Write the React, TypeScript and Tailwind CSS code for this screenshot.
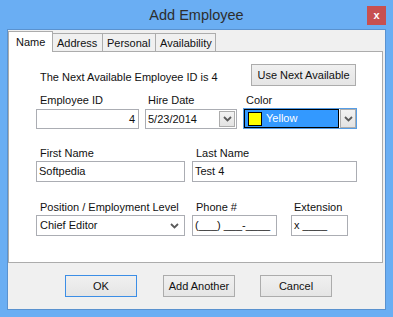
import React from "react";

const font = { fontFamily: '"Liberation Sans", Arial, sans-serif' };

function Chevron() {
  return (
    <svg width="9" height="6" viewBox="0 0 9 6" className="block">
      <path d="M1 1 L4.5 4.5 L8 1" fill="none" stroke="#5a5a5a" strokeWidth="1.8" />
    </svg>
  );
}

function ArrowBox() {
  return (
    <div className="w-[16px] h-full border border-[#acacac] bg-gradient-to-b from-[#f2f2f2] to-[#e3e3e3] flex items-center justify-center">
      <Chevron />
    </div>
  );
}

function Label({ children, indent = "pl-[4px]" }: { children: React.ReactNode; indent?: string }) {
  return <div className={`h-[14px] leading-[14px] ${indent} text-[#111]`}>{children}</div>;
}

function Button({ children, width, primary }: { children: React.ReactNode; width: string; primary?: boolean }) {
  return (
    <div
      className={`${width} h-[22px] flex items-center justify-center border bg-gradient-to-b from-[#f0f0f0] to-[#e5e5e5] text-[#111] ${
        primary ? "border-[#3c8ee6]" : "border-[#acacac]"
      }`}
    >
      {children}
    </div>
  );
}

export default function App() {
  return (
    <div className="w-[393px] h-[317px] bg-[#6aaef3] px-[7px] pb-[7px] flex flex-col text-[11px]" style={font}>
      {/* title bar */}
      <div className="h-[29px] grid grid-cols-[1fr_auto_1fr] items-start">
        <div />
        <div className="pt-[6px] text-[14.5px] leading-[18px] text-[#2d2d2d]">Add Employee</div>
        <div className="flex justify-end pt-[6px]">
          <div className="w-[19px] h-[19px] bg-[#c75050] flex items-center justify-center text-white font-bold text-[11px] leading-none">
            x
          </div>
        </div>
      </div>

      {/* client */}
      <div className="flex-1 border border-[#5a92cf] bg-[#f0f0f0] flex flex-col">
        {/* tabs */}
        <div className="flex items-start h-[22px] pt-[1px] -mb-px relative z-10">
          <div className="w-[45px] h-[21px] bg-white border-l border-t border-r border-[#acacac] pl-[7px] pt-[3px] leading-[14px] text-[#111]">
            Name
          </div>
          <div className="w-[50px] h-[18px] mt-[2px] bg-[#f0f0f0] border-t border-r border-[#acacac] pl-[4px] pt-[2px] leading-[14px] text-[#111]">
            Address
          </div>
          <div className="w-[53px] h-[18px] mt-[2px] bg-[#f0f0f0] border-t border-r border-[#acacac] pl-[4px] pt-[2px] leading-[14px] text-[#111]">
            Personal
          </div>
          <div className="w-[60px] h-[18px] mt-[2px] bg-[#f0f0f0] border-t border-r border-[#acacac] pl-[4px] pt-[2px] leading-[14px] text-[#111]">
            Availability
          </div>
        </div>

        {/* panel */}
        <div className="w-[375px] h-[212px] bg-white border border-[#acacac] pl-[27px] pt-[12px] flex flex-col">
          <div className="w-[320px] h-[22px] flex items-center justify-between">
            <div className="pl-[4px] pt-[4px] text-[#111]">The Next Available Employee ID is 4</div>
            <Button width="w-[105px]">Use Next Available</Button>
          </div>

          <div className="mt-[7px] flex gap-[6px]">
            <div className="w-[103px] flex flex-col">
              <Label>Employee ID</Label>
              <div className="mt-[2px] h-[20px] border border-[#abadb3] flex items-center justify-end pr-[3px] text-[#111]">4</div>
            </div>
            <div className="w-[92px] flex flex-col">
              <Label indent="pl-[3px]">Hire Date</Label>
              <div className="mt-[2px] h-[20px] border border-[#abadb3] p-px flex items-center">
                <div className="flex-1 pl-[1px] text-[#111]">5/23/2014</div>
                <ArrowBox />
              </div>
            </div>
            <div className="w-[114px] flex flex-col">
              <Label indent="pl-[3px]">Color</Label>
              <div className="mt-[1px] h-[21px] border border-[#569de5] flex items-center gap-[1px]">
                <div className="flex-1 h-full border border-black bg-[#3399ff] flex items-center pl-[3px] gap-[4px]">
                  <div className="w-[14px] h-[14px] border border-black bg-[#ffff00]" />
                  <span className="text-white">Yellow</span>
                </div>
                <ArrowBox />
              </div>
            </div>
          </div>

          <div className="mt-[17px] flex gap-[7px]">
            <div className="w-[149px] flex flex-col">
              <Label>First Name</Label>
              <div className="mt-px h-[21px] border border-[#abadb3] flex items-center pl-[2px] text-[#111]">Softpedia</div>
            </div>
            <div className="w-[165px] flex flex-col">
              <Label>Last Name</Label>
              <div className="mt-px h-[21px] border border-[#abadb3] flex items-center pl-[2px] text-[#111]">Test 4</div>
            </div>
          </div>

          <div className="mt-[18px] flex">
            <div className="w-[149px] flex flex-col">
              <Label>Position / Employment Level</Label>
              <div className="mt-px h-[21px] border border-[#abadb3] flex items-center pl-[3px] pr-[5px] text-[#111]">
                <span className="flex-1">Chief Editor</span>
                <Chevron />
              </div>
            </div>
            <div className="w-[85px] ml-[7px] flex flex-col">
              <Label>Phone #</Label>
              <div className="mt-px h-[21px] border border-[#abadb3] flex items-center pl-[2px] text-[#111]">(___) ___-____</div>
            </div>
            <div className="w-[57px] ml-[14px] flex flex-col">
              <Label indent="pl-[3px]">Extension</Label>
              <div className="mt-px h-[21px] border border-[#abadb3] flex items-center pl-[2px] text-[#111]">x ____</div>
            </div>
          </div>
        </div>

        {/* buttons */}
        <div className="mt-[12px] flex">
          <div className="ml-[57px]">
            <Button width="w-[72px]" primary>OK</Button>
          </div>
          <div className="ml-[26px]">
            <Button width="w-[72px]">Add Another</Button>
          </div>
          <div className="ml-[25px]">
            <Button width="w-[72px]">Cancel</Button>
          </div>
        </div>
      </div>
    </div>
  );
}
